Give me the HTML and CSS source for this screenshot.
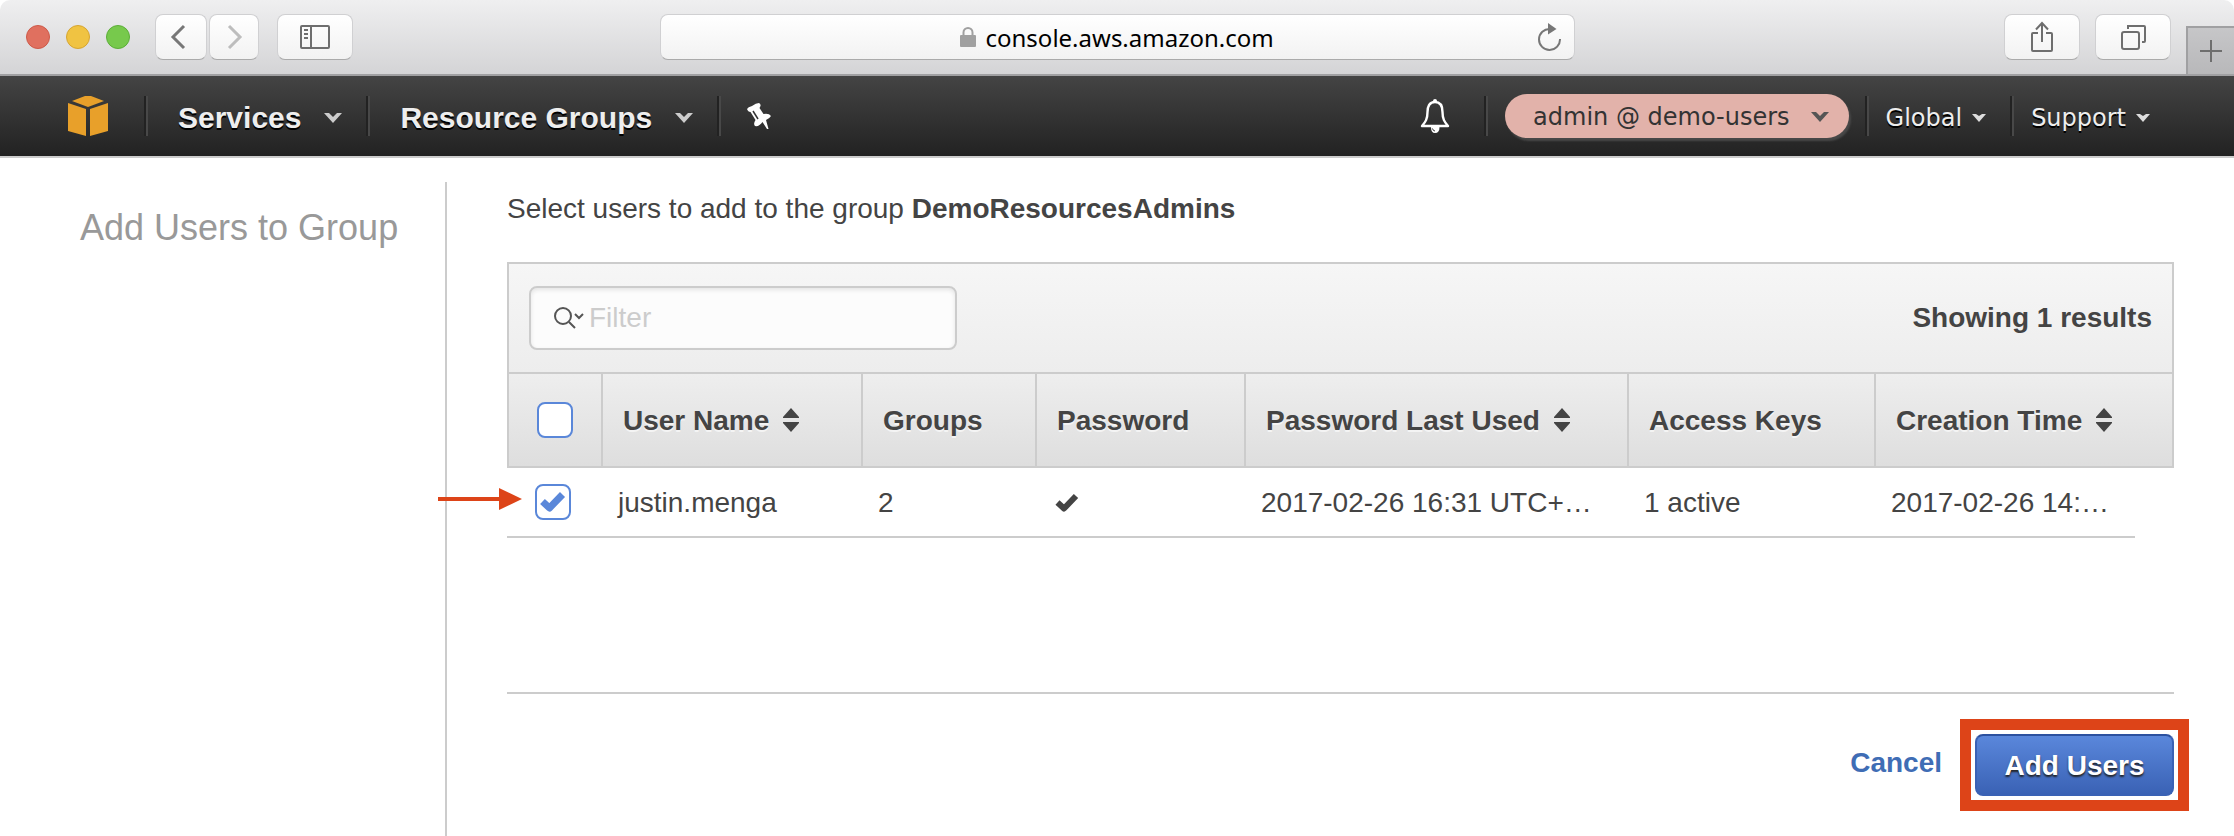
FILE: index.html
```html
<!DOCTYPE html>
<html lang="en">
<head>
<meta charset="utf-8">
<title>Add Users to Group</title>
<link rel="stylesheet" href="styles.css">
</head>
<body>
<div class="browser">
  <div class="browser-left">
    <div class="lights">
      <span class="light light-close"></span>
      <span class="light light-min"></span>
      <span class="light light-max"></span>
    </div>
    <div class="history">
      <button class="chrome-btn btn-back" aria-label="Back"><svg width="52" height="44" viewBox="0 0 52 44"><path d="M29 11 18 22 29 33" fill="none" stroke="#777" stroke-width="3"/></svg></button>
      <button class="chrome-btn btn-forward" aria-label="Forward"><svg width="50" height="44" viewBox="0 0 50 44"><path d="M20 11 31 22 20 33" fill="none" stroke="#bdbdbd" stroke-width="3"/></svg></button>
    </div>
    <button class="chrome-btn btn-wide" aria-label="Show sidebar"><svg width="30" height="24" viewBox="0 0 30 24" fill="none" stroke="#6e6e6e" stroke-width="2"><rect x="1" y="1" width="28" height="22" rx="1"/><path d="M11 1V23M4 5H8M4 9H8M4 13H8"/></svg></button>
  </div>
  <div class="address">
    <svg class="lock" width="16" height="20" viewBox="0 0 16 20"><path d="M3.500 9V5.500a4.500 4.500 0 0 1 9 0V9" fill="none" stroke="#a0a0a0" stroke-width="2"/><rect y="8" width="16" height="12" rx="1" fill="#a0a0a0"/></svg>
    <input class="address-input" type="text" aria-label="Address" value="console.aws.amazon.com">
    <button class="reload" aria-label="Reload"><svg width="26" height="28" viewBox="0 0 26 28"><path d="M14 6A10.500 10.500 0 1 0 24 16" fill="none" stroke="#777" stroke-width="2"/><path d="M12 0 20.500 6 12 11.500Z" fill="#777"/></svg></button>
  </div>
  <div class="browser-right">
    <button class="chrome-btn btn-wide" aria-label="Share"><svg width="24" height="32" viewBox="0 0 24 32" fill="none" stroke="#6e6e6e" stroke-width="2"><path d="M8 12H3a1 1 0 0 0-1 1V29a1 1 0 0 0 1 1H21a1 1 0 0 0 1-1V13a1 1 0 0 0-1-1H16M12 21V2M6 8.500 12 2 18 8.500"/></svg></button>
    <button class="chrome-btn btn-wide" aria-label="Show tabs"><svg width="26" height="26" viewBox="0 0 26 26" fill="none" stroke="#6e6e6e" stroke-width="2"><rect x="2" y="8" width="17" height="17" rx="2"/><path d="M8 5V2H24a1 1 0 0 1 1 1V17a1 1 0 0 1-1 1H22"/></svg></button>
    <button class="new-tab" aria-label="New tab"><svg width="22" height="22" viewBox="0 0 22 22"><path d="M11 0V22M0 11H22" stroke="#6e6e6e" stroke-width="2"/></svg></button>
  </div>
</div>

<nav class="nav">
  <a class="logo" href="#" aria-label="Console home"><svg width="40" height="40" viewBox="0 0 40 40" fill="#e8a02a"><path d="M4 5 17 0H23L36 5 20 11Z"/><path d="M0 7 18 13V40L0 35Z"/><path d="M40 7 22 13V40L40 35Z"/></svg></a>
  <span class="sep"></span>
  <button class="nav-item nav-bold">Services<svg width="18" height="10" viewBox="0 0 18 10"><path d="M0 0H5L9 4 13 0H18L9 10Z" fill="#ccc"/></svg></button>
  <span class="sep"></span>
  <button class="nav-item nav-bold">Resource Groups<svg width="18" height="10" viewBox="0 0 18 10"><path d="M0 0H5L9 4 13 0H18L9 10Z" fill="#ccc"/></svg></button>
  <span class="sep"></span>
  <button class="nav-icon nav-pin" aria-label="Pin"><svg width="26" height="28" viewBox="0 0 26 28"><path fill="#fff" d="M0 7Q1 5 5 4 9 1 12 1 14 2 13.500 4L12.500 6 16.500 12Q22 11 24 14 23 16 19 18L21.500 27H20L15.500 20Q12 25 8 24 6 22 8.500 18L3.500 10Q1 10 0 7Z"/><path d="M6 9 11 17" stroke="#333" stroke-width="1.500"/></svg></button>
  <span class="spacer"></span>
  <button class="nav-icon nav-bell" aria-label="Notifications"><svg width="30" height="34" viewBox="0 0 30 34"><path d="M15 3C9 3 7.500 8 7.500 13 7.500 20 5.500 23 2 27H28C24.500 23 22.500 20 22.500 13 22.500 8 21 3 15 3Z" fill="none" stroke="#fff" stroke-width="2.400" stroke-linejoin="round"/><circle cx="15" cy="2" r="2" fill="#fff"/><path d="M11 28H19.500Q19.500 34 15 34 11 34 11 28Z" fill="#fff"/><path d="M12.500 29.500Q13 32 15 32" fill="none" stroke="#333"/></svg></button>
  <span class="sep"></span>
  <button class="account">admin @ demo-users<svg width="18" height="10" viewBox="0 0 18 10"><path d="M0 0H5L9 4 13 0H18L9 10Z" fill="#555"/></svg></button>
  <span class="sep"></span>
  <button class="nav-item nav-plain">Global<svg width="14" height="8" viewBox="0 0 14 8"><path d="M0 0H4L7 2 10 0H14L7 8Z" fill="#ddd"/></svg></button>
  <span class="sep"></span>
  <button class="nav-item nav-plain">Support<svg width="14" height="8" viewBox="0 0 14 8"><path d="M0 0H4L7 2 10 0H14L7 8Z" fill="#ddd"/></svg></button>
</nav>

<div class="page">
  <aside class="side"><h1 class="side-title">Add Users to Group</h1></aside>
  <main class="main">
    <p class="prompt">Select users to add to the group <strong>DemoResourcesAdmins</strong></p>
    <div class="toolbar">
      <label class="filter">
        <svg width="32" height="24" viewBox="0 0 32 24" fill="none" stroke="#555" stroke-width="2"><circle cx="10" cy="10" r="8"/><path d="M16 16 22 22M22 8 26 12 30 8"/></svg>
        <input class="filter-input" type="text" placeholder="Filter" aria-label="Filter">
      </label>
      <strong class="count">Showing 1 results</strong>
    </div>
    <table class="users">
      <colgroup><col class="c-check"><col class="c-user"><col class="c-groups"><col class="c-pass"><col class="c-last"><col class="c-keys"><col><col class="c-end"></colgroup>
      <thead>
        <tr>
          <th class="check"><input class="tick" type="checkbox" aria-label="Select all users"></th>
          <th>User Name<svg class="sort" width="16" height="24" viewBox="0 0 16 24"><path d="M8 0 16 9V10H0V9ZM8 24 0 15V14H16V15Z" fill="#444"/></svg></th>
          <th>Groups</th>
          <th>Password</th>
          <th>Password Last Used<svg class="sort" width="16" height="24" viewBox="0 0 16 24"><path d="M8 0 16 9V10H0V9ZM8 24 0 15V14H16V15Z" fill="#444"/></svg></th>
          <th>Access Keys</th>
          <th colspan="2">Creation Time<svg class="sort" width="16" height="24" viewBox="0 0 16 24"><path d="M8 0 16 9V10H0V9ZM8 24 0 15V14H16V15Z" fill="#444"/></svg></th>
        </tr>
      </thead>
      <tbody>
        <tr>
          <td class="check"><span class="tick-wrap"><input class="tick" type="checkbox" checked aria-label="Select justin.menga"><svg class="tick-mark" width="28" height="24" viewBox="0 0 28 24"><path d="M3.500 11.500 10.500 18 23.500 4.500" fill="none" stroke="#5a87d9" stroke-width="7" stroke-linejoin="round"/></svg></span><svg class="arrow" width="84" height="24" viewBox="0 0 84 24" fill="#dd4418"><path d="M0 10H61V1L84 12 61 23V14H0Z"/></svg></td>
          <td>justin.menga</td>
          <td>2</td>
          <td><svg class="yes" width="24" height="20" viewBox="0 0 24 20"><path d="M2.500 9.500 9 15.500 21 3" fill="none" stroke="#444" stroke-width="6" stroke-linejoin="round"/></svg></td>
          <td>2017-02-26 16:31 UTC+…</td>
          <td>1 active</td>
          <td>2017-02-26 14:…</td>
          <td class="row-end"></td>
        </tr>
      </tbody>
    </table>
    <div class="actions">
      <a class="cancel" href="#">Cancel</a>
      <span class="highlight"><button class="primary">Add Users</button></span>
    </div>
  </main>
</div>
</body>
</html>
```
FILE: styles.css
```css
* { box-sizing: border-box; }
body {
  margin: 0;
  min-height: 100vh;
  display: flex;
  flex-direction: column;
  background: #fff;
  color: #444;
  font: 28px/36px "Helvetica Neue", "Liberation Sans", Arial, sans-serif;
}
button {
  margin: 0;
  padding: 0;
  border: 0;
  background: none;
  font: inherit;
  color: inherit;
}
svg { display: block; flex: none; }

/* Browser bar */
.browser {
  display: grid;
  grid-template-columns: 1fr 41% 1fr;
  align-items: center;
  height: 76px;
  background: linear-gradient(#efeff0, #d4d4d6);
  border-bottom: 2px solid #a0a0a2;
  border-radius: 10px 10px 0 0;
  overflow: hidden;
}
.browser-left { display: flex; align-items: center; padding-left: 26px; }
.lights { display: flex; gap: 16px; margin-right: 25px; }
.light { width: 24px; height: 24px; border-radius: 50%; border: 1px solid; }
.light-close { background: #e0705f; border-color: #cd5a49; }
.light-min { background: #f0c342; border-color: #d6a532; }
.light-max { background: #77c94c; border-color: #5cae38; }
.history { display: flex; gap: 2px; margin-right: 18px; }
.chrome-btn, .address {
  display: flex;
  align-items: center;
  justify-content: center;
  height: 46px;
  background: linear-gradient(#fff, #f2f2f2);
  border: 1px solid #d0d0d2;
  border-bottom-color: #aaa;
  border-radius: 8px;
}
.btn-back { width: 52px; }
.btn-forward { width: 50px; }
.btn-wide { width: 76px; }
.address { position: relative; gap: 10px; margin-left: 1px; }
.address-input {
  width: 290px;
  padding: 2px 0 0;
  border: 0;
  background: none;
  color: #000;
  font: 24px/32px "Noto Sans", sans-serif;
}
.reload { position: absolute; right: 12px; top: 8px; }
.browser-right { display: flex; justify-content: flex-end; align-items: center; gap: 15px; height: 100%; }
.new-tab {
  display: flex;
  align-items: center;
  justify-content: center;
  align-self: flex-end;
  width: 48px;
  height: 48px;
  background: linear-gradient(#c6c6c8, #b8b8ba);
  border: solid #a0a0a2;
  border-width: 2px 0 0 2px;
}

/* Console navigation */
.nav {
  display: flex;
  align-items: center;
  height: 82px;
  padding: 0 84px 0 68px;
  background: linear-gradient(#444, #222);
  border-bottom: 2px solid #ccc;
}
.logo { margin-right: 36px; }
.sep { width: 4px; height: 40px; background: linear-gradient(90deg, #222 50%, #484848 50%); }
.nav-item { display: flex; align-items: center; padding-top: 3px; color: #eee; text-shadow: 0 2px 0 #000; white-space: nowrap; }
.nav-bold { gap: 23px; padding-left: 30px; padding-right: 24px; font-size: 30px; font-weight: 700; }
.nav-plain { gap: 10px; padding-left: 17px; font: 24px/32px Verdana, "DejaVu Sans", sans-serif; }
.nav-plain + .sep { margin-left: 24px; }
.nav-pin { margin-left: 26px; }
.spacer { flex: 1; }
.nav-bell { margin-right: 34px; }
.account {
  display: flex;
  align-items: center;
  justify-content: space-between;
  height: 44px;
  margin: 0 16px 0 17px;
  padding: 2px 20px 0 28px;
  gap: 21px;
  background: #e2b2aa;
  border-radius: 22px;
  box-shadow: 2px 3px 2px #484848;
  color: #333;
  font: 24px/32px Verdana, "DejaVu Sans", sans-serif;
}

/* Page */
.page { flex: 1; display: flex; padding: 24px 60px 0 80px; }
.side { width: 367px; border-right: 2px solid #ccc; }
.side-title { margin: 24px 0 0; font-size: 36px; line-height: 44px; font-weight: 400; color: #999; }
.main { flex: 1; padding: 9px 0 0 60px; }
.prompt { margin: 0 0 35px; }
.toolbar {
  display: flex;
  align-items: center;
  justify-content: space-between;
  height: 110px;
  padding: 0 20px;
  border: 2px solid #ccc;
  border-bottom: 0;
  background: linear-gradient(#f6f6f6, #ededed);
}
.filter {
  display: flex;
  align-items: center;
  gap: 4px;
  width: 428px;
  height: 64px;
  padding: 0 20px 0 22px;
  border: 2px solid #ccc;
  border-radius: 8px;
  background: #fcfcfc;
  box-shadow: inset 0 2px 4px #e4e4e4;
}
.filter-input { flex: 1; min-width: 0; padding: 0; border: 0; background: none; font: inherit; color: #444; }
.filter-input::placeholder { color: #ccc; }
.users { width: 100%; table-layout: fixed; border-collapse: separate; border-spacing: 0; }
.c-check { width: 96px; }
.c-user { width: 260px; }
.c-groups { width: 174px; }
.c-pass { width: 209px; }
.c-last { width: 383px; }
.c-keys { width: 247px; }
.c-end { width: 39px; }
.users th {
  height: 96px;
  padding: 2px 0 0 20px;
  border: solid #ccc;
  border-width: 2px 2px 2px 0;
  background: linear-gradient(#eee, #dedede);
  text-align: left;
  text-shadow: 0 2px 0 #f4f4f4;
  white-space: nowrap;
}
.users td { height: 70px; padding: 2px 0 0 15px; border-bottom: 2px solid #ccc; white-space: nowrap; }
.users .row-end { padding: 0; border: 0; }
.users th.check { padding: 0 0 0 28px; border-left-width: 2px; }
.users td.check { position: relative; padding: 0 0 0 28px; }
.sort { display: inline-block; margin-left: 14px; vertical-align: -2px; }
.yes { margin-left: 3px; }
.tick {
  display: block;
  appearance: none;
  width: 36px;
  height: 36px;
  margin: 0;
  border: 2px solid #5a87d9;
  border-radius: 8px;
  background: #fff;
}
.tick-wrap { display: block; position: relative; }
.tick-mark { position: absolute; left: 4px; top: 6px; }
.arrow { position: absolute; left: -69px; top: 19px; }
.actions {
  display: flex;
  justify-content: flex-end;
  align-items: center;
  gap: 33px;
  margin-top: 154px;
  padding-top: 40px;
  border-top: 2px solid #ccc;
}
.cancel { padding-bottom: 4px; color: #3f6db5; font-weight: 700; text-decoration: none; }
.highlight { outline: 11px solid #dd4418; outline-offset: 4px; }
.primary {
  display: block;
  width: 199px;
  height: 62px;
  padding-top: 2px;
  border: 2px solid #3a62b5;
  border-top-color: #2c519f;
  border-radius: 8px;
  background: linear-gradient(#5a87db, #3a62b5);
  color: #fff;
  font-weight: 700;
  text-shadow: 0 2px 2px #222;
}
```
